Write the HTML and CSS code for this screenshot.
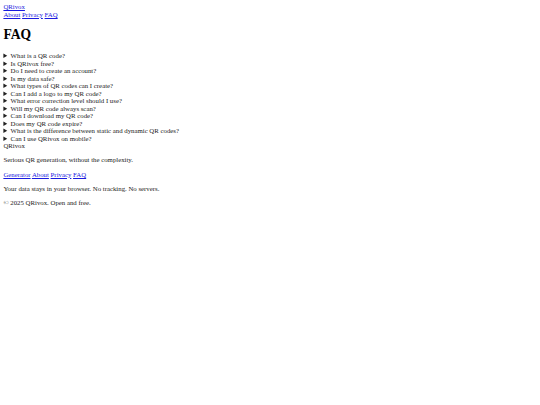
FILE: index.html
```html
<!DOCTYPE html>
<html lang="en">
<head>
<meta charset="utf-8">
<title>FAQ — QRivox</title>
<link rel="stylesheet" href="styles.css">
</head>
<body class="page">
<header class="site-header">
  <a class="brand" href="#">QRivox</a>
  <nav class="nav"><a href="#">About</a> <a href="#">Privacy</a> <a href="#">FAQ</a></nav>
</header>
<main class="content">
  <h1 class="title">FAQ</h1>
  <details><summary>What is a QR code?</summary></details>
  <details><summary>Is QRivox free?</summary></details>
  <details><summary>Do I need to create an account?</summary></details>
  <details><summary>Is my data safe?</summary></details>
  <details><summary>What types of QR codes can I create?</summary></details>
  <details><summary>Can I add a logo to my QR code?</summary></details>
  <details><summary>What error correction level should I use?</summary></details>
  <details><summary>Will my QR code always scan?</summary></details>
  <details><summary>Can I download my QR code?</summary></details>
  <details><summary>Does my QR code expire?</summary></details>
  <details><summary>What is the difference between static and dynamic QR codes?</summary></details>
  <details><summary>Can I use QRivox on mobile?</summary></details>
</main>
<footer class="site-footer">
  <div class="footer-brand">QRivox</div>
  <p>Serious QR generation, without the complexity.</p>
  <p><a href="#">Generator</a> <a href="#">About</a> <a href="#">Privacy</a> <a href="#">FAQ</a></p>
  <p>Your data stays in your browser. No tracking. No servers.</p>
  <p>© 2025 QRivox. Open and free.</p>
</footer>
</body>
</html>
```
FILE: styles.css
```css
.page {
  margin: 3.4px;
  font-family: "Liberation Serif", "Times New Roman", serif;
  font-size: 6.8px;
  line-height: 7.5px;
  color: #222;
}
.page a {
  color: #1a1ae0;
}
.title {
  font-size: 13.6px;
  line-height: 15.6px;
  margin: 9.1px 0;
  color: #000;
}
.site-footer p {
  margin: 6.8px 0;
}
```
